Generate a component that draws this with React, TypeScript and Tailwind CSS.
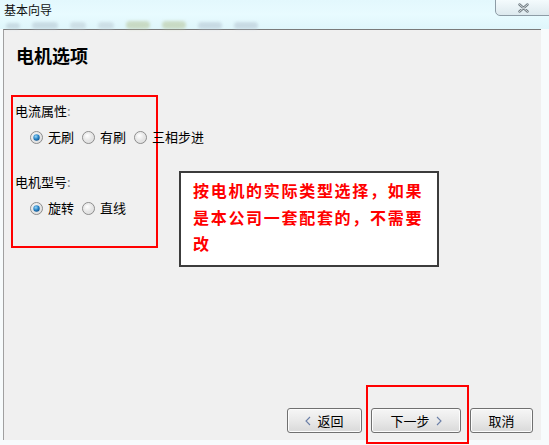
import React from "react";

const cjk = { fontFamily: '"Noto Sans CJK SC", "Noto Sans", sans-serif' };

function Radio({ checked }: { checked?: boolean }) {
  return (
    <svg width="13" height="13" viewBox="0 0 13 13" className="shrink-0">
      <defs>
        <radialGradient id="rg" cx="40%" cy="35%" r="70%">
          <stop offset="0%" stopColor="#ffffff" />
          <stop offset="100%" stopColor="#d4d4d4" />
        </radialGradient>
        <radialGradient id="dot" cx="40%" cy="35%" r="70%">
          <stop offset="0%" stopColor="#9ad6f6" />
          <stop offset="55%" stopColor="#2a86c8" />
          <stop offset="100%" stopColor="#0d4f8a" />
        </radialGradient>
      </defs>
      <circle cx="6.5" cy="6.5" r="6" fill="url(#rg)" stroke="#8d8d8d" strokeWidth="1" />
      <circle cx="6.5" cy="6.5" r="4.6" fill="none" stroke="#e8e8e8" strokeWidth="0.8" />
      {checked && <circle cx="6.5" cy="6.5" r="3.2" fill="url(#dot)" />}
    </svg>
  );
}

function RadioItem({ label, checked }: { label: string; checked?: boolean }) {
  return (
    <div className="flex items-center gap-[5px] shrink-0 whitespace-nowrap">
      <Radio checked={checked} />
      <span className="text-[13px] leading-[18px] text-black">{label}</span>
    </div>
  );
}

function Chevron({ dir }: { dir: "l" | "r" }) {
  return (
    <svg width="6" height="10" viewBox="0 0 6 10" className="shrink-0">
      <path
        d={dir === "l" ? "M5 1 L1 5 L5 9" : "M1 1 L5 5 L1 9"}
        fill="none"
        stroke="#6b7fa8"
        strokeWidth="1.1"
      />
    </svg>
  );
}

function Btn({ w, children }: { w: string; children: React.ReactNode }) {
  return (
    <div
      className={`${w} h-[25px] flex items-center justify-center gap-[6px] rounded-[3px] border border-[#707070] bg-gradient-to-b from-[#f6f6f6] via-[#e9e9e9] to-[#d9d9d9] text-[13px] text-black shadow-[inset_0_0_0_1px_#fcfcfc]`}
    >
      {children}
    </div>
  );
}

export default function App() {
  return (
    <div className="w-[549px] h-[445px] overflow-hidden bg-[#f7fbfc] flex flex-col" style={cjk}>
      {/* Title bar */}
      <div className="relative h-[29px] shrink-0 bg-gradient-to-b from-[#e3f8fd] via-[#e8fbff] to-[#dff6fb] flex flex-col">
        <div className="pl-[4px] pt-[1px] text-[12px] leading-[17px] text-[#111]">基本向导</div>
        <div className="flex items-end gap-[12px] pl-[6px] mt-[3px] blur-[1.5px] opacity-60">
          <div className="w-[14px] h-[6px] rounded-full bg-[#b8cad4]" />
          <div className="w-[26px] h-[7px] rounded-full bg-[#b8cad4]" />
          <div className="w-[16px] h-[7px] rounded-full bg-[#c0d0d8]" />
          <div className="w-[16px] h-[7px] rounded-full bg-[#c0d0d8]" />
          <div className="w-[24px] h-[8px] rounded-full bg-[#b9c8a0]" />
          <div className="w-[24px] h-[8px] rounded-full bg-[#b9c8a0]" />
          <div className="w-[24px] h-[7px] rounded-full bg-[#b8c8d4]" />
          <div className="w-[24px] h-[7px] rounded-full bg-[#b8c8d4]" />
        </div>
        <div className="absolute right-[-8px] top-[-1px] w-[62px] h-[17px] rounded-bl-[5px] border border-[#8d9ca6] bg-gradient-to-b from-[#f4fbfd] to-[#dde9ee] flex items-center pl-[22px]">
          <svg width="11" height="10" viewBox="0 0 11 10">
            <path d="M1.5 1.5 L9.5 8.5 M9.5 1.5 L1.5 8.5" stroke="#6f7a80" strokeWidth="2.4" strokeLinecap="round" />
            <path d="M1.5 1.5 L9.5 8.5 M9.5 1.5 L1.5 8.5" stroke="#eef3f5" strokeWidth="0.8" strokeLinecap="round" />
          </svg>
        </div>
      </div>

      {/* Body */}
      <div className="flex flex-1">
        <div className="w-[3px] shrink-0" />
        <div className="w-[538px] h-[411px] shrink-0 bg-[#f0f0f0] border-l border-[#a0a0a0] border-t border-t-[#7a7a7a] flex flex-col">
          <div className="pl-[12px] pt-[12px] text-[18px] leading-[27px] font-bold text-black">电机选项</div>

          <div className="flex items-start mt-[26px]">
            <div className="ml-[7px] w-[147px] h-[153px] shrink-0 border-2 border-[#ff0000] pl-[2px] pt-[5px] flex flex-col">
              <div className="text-[13px] leading-[18px] text-black whitespace-nowrap">
                电流属性<span className="text-[#888]">:</span>
              </div>
              <div className="flex items-center gap-[8px] pl-[15px] mt-[8px] w-max">
                <RadioItem label="无刷" checked />
                <RadioItem label="有刷" />
                <RadioItem label="三相步进" />
              </div>
              <div className="text-[13px] leading-[18px] text-black mt-[27px] whitespace-nowrap">
                电机型号<span className="text-[#888]">:</span>
              </div>
              <div className="flex items-center gap-[8px] pl-[15px] mt-[8px] w-max">
                <RadioItem label="旋转" checked />
                <RadioItem label="直线" />
              </div>
            </div>

            <div className="ml-[21px] mt-[76px] w-[260px] h-[96px] shrink-0 bg-white border-2 border-[#3c3c3c] pl-[12px] pt-[4px]">
              <div className="text-[16px] leading-[26.5px] font-bold text-[#ff0000] tracking-[1.7px]">
                按电机的实际类型选择，如果是本公司一套配套的，不需要改
              </div>
            </div>
          </div>

          <div className="flex-1" />

          <div className="flex justify-end items-center gap-[9px] pr-[8px] pb-[7px]">
            <Btn w="w-[75px]">
              <Chevron dir="l" />
              <span>返回</span>
            </Btn>
            <div className="relative">
              <Btn w="w-[90px]">
                <span>下一步</span>
                <Chevron dir="r" />
              </Btn>
              <div className="absolute left-[-5px] right-[-8px] top-[-23px] bottom-[-11px] border-2 border-[#ff0000]" />
            </div>
            <Btn w="w-[63px]">
              <span>取消</span>
            </Btn>
          </div>
        </div>
      </div>
    </div>
  );
}
